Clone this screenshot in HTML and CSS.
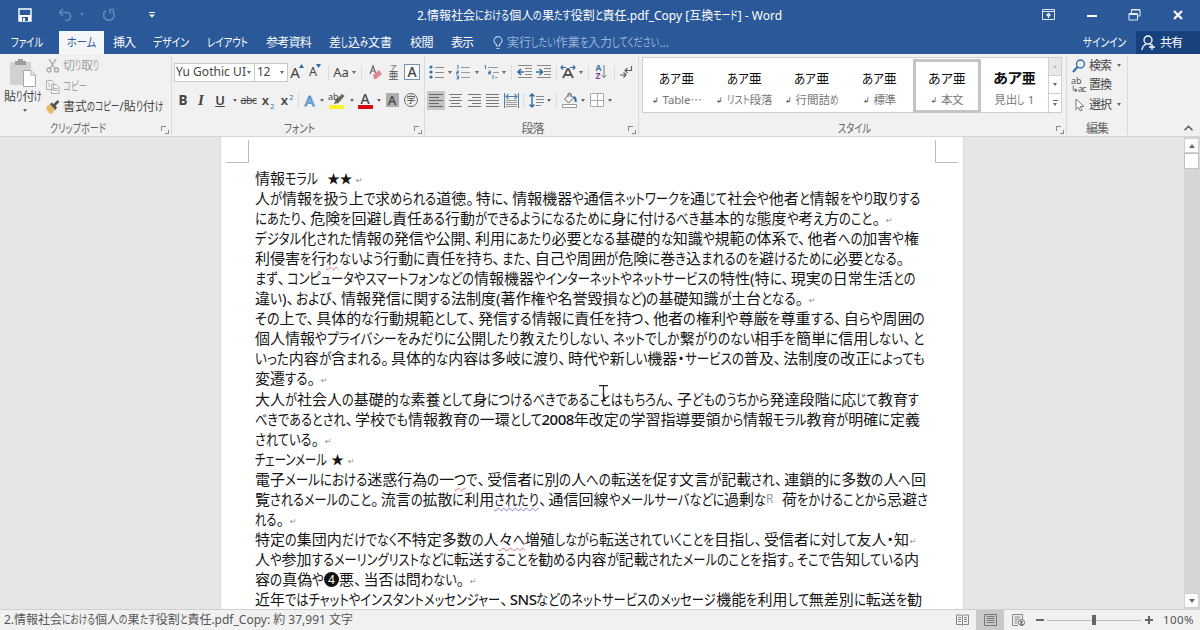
FILE: index.html
```html
<!doctype html>
<html lang="ja">
<head>
<meta charset="utf-8">
<title>2.情報社会における個人の果たす役割と責任.pdf_Copy - Word</title>
<link rel="stylesheet" href="styles.css">
</head>

<body>
<div class="app">
	<header class="top">
		<div class="titlebar">
			<div class="quick">
				<svg width="14" height="14" viewBox="0 0 14 14"><path d="M1 1h12v12H1z" fill="none" stroke="#fff" stroke-width="1.4"/><path d="M1 7h12v6H1z" fill="#fff"/><path d="M4 9h6v4H4z" fill="#2a5899"/><path d="M5 10h2v3H5z" fill="#fff"/></svg>
				<svg width="14" height="14" viewBox="0 0 14 14" fill="none" stroke="#5f86bd" stroke-width="1.7"><path d="M5 1 1.500 4.500 5 8M2 4.500h6.500a4 4 0 0 1 0 8H7"/></svg>
				<i class="arr dim"></i>
				<svg width="14" height="14" viewBox="0 0 14 14" fill="none" stroke="#5f86bd" stroke-width="1.7"><path d="M4 2.500a5.300 5.300 0 1 0 6.500.5M8 5.500V1.500h4.500"/></svg>
				<svg width="6" height="6" viewBox="0 0 6 6" fill="#fff"><path d="M0 0h6v1H0zM0 2.500h6L3 5.500z"/></svg>
			</div>
			<div class="doctitle"><span data-w="365">2.情報社会における個人の果たす役割と責任.pdf_Copy [互換モード] - Word</span></div>
			<div class="winbtns">
				<svg width="13" height="11" viewBox="0 0 13 11" fill="none" stroke="#dce9ee"><path d="M.5.5h12v10H.5zM.5 2.500h12"/><path d="M6.500 9V4.500M4.500 6.500l2-2 2 2" stroke-width="1.500"/></svg>
				<svg width="10" height="11" viewBox="0 0 10 11"><path d="M0 6h10v2H0z" fill="#fff"/></svg>
				<svg width="13" height="13" viewBox="0 0 13 13" fill="none" stroke="#e6efef"><path d="M1 5.500h8.500v6.500H1zM1 6.500h8.500M3.500 5V1.500H12V8H10M3.500 2h8.500"/></svg>
				<svg width="10" height="10" viewBox="0 0 10 10"><path d="M1 1l8 8M9 1 1 9" stroke="#fff" stroke-width="2.200"/></svg>
			</div>
		</div>
		<nav class="tabs">
			<span data-w="32">ファイル</span>
			<span class="active"><b data-w="29">ホーム</b></span>
			<span data-w="22">挿入</span>
			<span data-w="36">デザイン</span>
			<span data-w="41">レイアウト</span>
			<span data-w="45">参考資料</span>
			<span data-w="63">差し込み文書</span>
			<span data-w="23">校閲</span>
			<span data-w="22">表示</span>
			<div class="tell">
				<svg width="10" height="14" viewBox="0 0 10 14" fill="none" stroke="#b9cde8" stroke-width="1.200"><path d="M3.500 10V8.500C2 7.500 1 6.500 1 4.700a4 4 0 0 1 8 0C9 6.500 8 7.500 6.500 8.500V10zM3.500 12.500h3"/></svg>
				<span data-w="162">実行したい作業を入力してください...</span>
			</div>
			<span class="signin" data-w="43">サインイン</span>
			<div class="share">
				<svg width="15" height="16" viewBox="0 0 15 16" fill="none" stroke="#fff" stroke-width="1.300"><circle cx="7" cy="5" r="4"/><path d="M1 15c.3-3 2-5 4.500-6M8.500 9l1.500 1M11 9v6M8 12h6"/></svg>
				<span data-w="22">共有</span>
			</div>
		</nav>
	</header>

	<section class="ribbon">
		<div class="group clip">
			<div class="clipbody">
				<div class="paste">
					<svg width="28" height="28" viewBox="0 0 28 28"><path d="M1 3h21v23H1z" fill="#d2d0d3"/><path d="M6 2h3V0h5v2h3v4H6z" fill="#9d9d9f"/><path d="M14.500 11.500H22l4.500 4.500v11.500h-12z" fill="#fff" stroke="#a9a9a9"/><path d="M22 11.500V16h4.500" fill="none" stroke="#a9a9a9"/></svg>
					<span data-w="38">貼り付け</span>
					<i class="arr"></i>
				</div>
				<div class="cliplist">
					<div class="off"><svg width="14" height="14" viewBox="0 0 14 14" fill="none" stroke="#a6a6a6" stroke-width="1.300"><path d="M3 0l6 9.500M10 0 4 9.500"/><circle cx="3" cy="11" r="2"/><circle cx="10.500" cy="11" r="2"/></svg><span data-w="36">切り取り</span></div>
					<div class="off"><svg width="14" height="14" viewBox="0 0 14 14" fill="#f4f4f4" stroke="#b0b0b0"><path d="M.5.5h5l2 2v7h-7zM5.500 4.500h5l2.500 2.500v6.500H5.500zM2 4h2M2 6h2M7.500 8.500h4M7.500 10.500h4"/></svg><span data-w="24">コピー</span></div>
					<div><svg width="14" height="14" viewBox="0 0 14 14"><path d="M0 7l4-3 5 5-3 5c-3 0-5-3-6-7z" fill="#e9b96a"/><path d="M4 4l2-1.500 5 5L9.500 10z" fill="#505050"/><path d="M8 5.500 12.500 1" stroke="#505050" stroke-width="2.500"/></svg><span data-w="100">書式のコピー/貼り付け</span></div>
				</div>
			</div>
			<div class="label"><span data-w="56">クリップボード</span><i class="launch"></i></div>
		</div>

		<div class="group font">
			<div class="row f1">
				<div class="combo"><span data-w="70">Yu Gothic UI</span><i class="arr"></i></div>
				<div class="combo size"><span data-w="13">12</span><i class="arr"></i></div>
				<div class="gA">A<svg width="5" height="4" viewBox="0 0 5 4"><path d="M0 4h5L2.500 0z" fill="#2e6cab"/></svg></div>
				<div class="gA small">A<svg width="5" height="4" viewBox="0 0 5 4"><path d="M0 0h5L2.500 4z" fill="#2e6cab"/></svg></div>
				<i class="sep"></i>
				<div class="aa">Aa</div><i class="arr"></i>
				<i class="sep"></i>
				<svg width="15" height="16" viewBox="0 0 15 16"><path d="M2 10 5 2l3 8M3 7h4" fill="none" stroke="#666" stroke-width="1.200"/><path d="M5 11l6-5 3 4-6 5H6z" fill="#e08791"/></svg>
				<div class="ruby"><small>ア</small>亜</div>
				<div class="boxA">A</div>
			</div>
			<div class="row f2">
				<b class="fb">B</b>
				<i class="fi">I</i>
				<u class="fu">U</u><i class="arr"></i>
				<s class="fs" data-w="16">abc</s>
				<div class="xx">x<sub>2</sub></div>
				<div class="xx">x<sup>2</sup></div>
				<i class="sep"></i>
				<div class="glow">A</div><i class="arr"></i>
				<svg class="marker" width="18" height="17" viewBox="0 0 18 17"><path d="M1 13h15v4H1z" fill="#fbf22a"/><path d="M6 12l1.500-4L14 2l2.500 2-6 7z" fill="#6a6a5a"/><text x="0" y="8" class="tiny">ab</text></svg><i class="arr"></i>
				<div class="redA">A</div><i class="arr"></i>
				<div class="shadeA">A</div>
				<div class="enc">字</div>
			</div>
			<div class="label"><span data-w="31">フォント</span><i class="launch"></i></div>
		</div>

		<div class="group para">
			<div class="row p1">
				<svg width="15" height="14" viewBox="0 0 15 14"><g fill="#2f6da8"><circle cx="2" cy="2" r="1.600"/><circle cx="2" cy="7" r="1.600"/><circle cx="2" cy="12" r="1.600"/></g><path d="M6 2.500h9M6 7.500h9M6 12.500h9" stroke="#888"/></svg><i class="arr"></i>
				<svg width="15" height="15" viewBox="0 0 15 15"><path d="M1 .5h1V4M.5 6h2v1.500h-2V9h2M.5 11h2v3h-2M1 12.500h1" fill="none" stroke="#2f6da8" stroke-width=".9"/><path d="M5 2.500h9M5 7.500h9M5 12.500h9" stroke="#999"/></svg><i class="arr"></i>
				<svg width="15" height="15" viewBox="0 0 15 15"><path d="M.5.500h1V4M4.500 6h2v3h-2V7.500h2M9 10v4" fill="none" stroke="#2f6da8" stroke-width=".9"/><path d="M4 2.500h10M9 7.500h6M11 12.500h3" stroke="#999"/></svg><i class="arr"></i>
				<i class="sep"></i>
				<svg width="15" height="14" viewBox="0 0 15 14"><path d="M1 .5h14M8 3.500h7M8 6.500h7M8 9.500h7M1 12.500h14" stroke="#888"/><path d="M7 7H2M4 4 1 7l3 3" fill="none" stroke="#2f6da8" stroke-width="1.700"/></svg>
				<svg width="15" height="14" viewBox="0 0 15 14"><path d="M1 .5h14M8 3.500h7M8 6.500h7M8 9.500h7M1 12.500h14" stroke="#888"/><path d="M0 7h6M3.500 4l3 3-3 3" fill="none" stroke="#2f6da8" stroke-width="1.700"/></svg>
				<i class="sep"></i>
				<svg width="16" height="14" viewBox="0 0 16 14"><path d="M3 13 7.500 4h1L13 13M5 10h6" fill="none" stroke="#555" stroke-width="1.800"/><path d="M6 2.500H1M3 .5l-2 2 2 2M10 2.500h5M13 .5l2 2-2 2" fill="none" stroke="#2f6da8" stroke-width="1.200"/></svg><i class="arr"></i>
				<i class="sep"></i>
				<div class="sort"><span><b>A</b><b class="z">Z</b></span><svg width="6" height="14" viewBox="0 0 6 14" fill="none" stroke="#777"><path d="M3 0v13M.5 10 3 12.500 5.500 10"/></svg></div>
				<i class="sep"></i>
				<svg width="14" height="13" viewBox="0 0 14 13" fill="none" stroke="#606060" stroke-width="1.200"><path d="M12.500 0v4.500H6M8.500 2 6 4.500 8.500 7M1 9h6M4.500 6.500 7 9l-2.500 2.500"/></svg>
			</div>
			<div class="row p2">
				<div class="picked"><svg width="14" height="15" viewBox="0 0 14 15" stroke="#666"><path d="M0 1.500h14M0 4.500h10M0 7.500h14M0 10.500h10M0 13.500h14"/></svg></div>
				<svg width="13" height="15" viewBox="0 0 13 15" stroke="#777"><path d="M0 1.500h13M2 4.500h9M0 7.500h13M2 10.500h9M0 13.500h13"/></svg>
				<svg width="13" height="15" viewBox="0 0 13 15" stroke="#777"><path d="M0 1.500h13M4 4.500h9M0 7.500h13M4 10.500h9M0 13.500h13"/></svg>
				<svg width="13" height="15" viewBox="0 0 13 15" stroke="#777"><path d="M0 1.500h13M0 4.500h13M0 7.500h13M0 10.500h13M0 13.500h13"/></svg>
				<svg width="15" height="15" viewBox="0 0 15 15" fill="none"><path d="M2 7.500h11M2 9.500h11M2 11.500h11M2 13.500h11" stroke="#999"/><path d="M.5 0v15M14.500 0v15M2 3.500h11M4.500 1 2 3.500 4.500 6M10.500 1 13 3.500 10.500 6" stroke="#4a7fb3" stroke-width="1.100"/></svg>
				<i class="sep"></i>
				<svg width="15" height="15" viewBox="0 0 15 15" fill="none"><path d="M7 3.500h8M7 6.500h8M7 9.500h8M7 12.500h5" stroke="#888"/><path d="M3 1v13M.5 3.500 3 1l2.500 2.500M.5 11.500 3 14l2.500-2.500" stroke="#2f6da8" stroke-width="1.400"/></svg><i class="arr"></i>
				<i class="sep"></i>
				<svg width="15" height="16" viewBox="0 0 15 16" fill="none"><path d="M.5 12.500h14v3H.5z" fill="#fff" stroke="#999"/><path d="M2.500 7 7.500 2l4 4-5 5zM6 5V2.500a1.500 1.500 0 0 1 3 0V5" stroke="#666"/><path d="M11.500 5c2 .5 2.500 2 2 5" stroke="#2f6da8" stroke-width="2"/></svg><i class="arr"></i>
				<svg width="14" height="14" viewBox="0 0 14 14"><path d="M.5.5h13v13H.5zM7.500.5v13M.5 7.500h13" fill="#fff" stroke="#a8a8a8"/></svg><i class="arr"></i>
			</div>
			<div class="label"><span data-w="22">段落</span><i class="launch"></i></div>
		</div>

		<div class="group styles">
			<div class="gallery">
				<div class="card"><p data-w="35">あア亜</p><small><em>↲</em><span data-w="39">Table⋯</span></small></div>
				<div class="card"><p data-w="35">あア亜</p><small><em>↲</em><span data-w="46">リスト段落</span></small></div>
				<div class="card"><p data-w="35">あア亜</p><small><em>↲</em><span data-w="43">行間詰め</span></small></div>
				<div class="card"><p data-w="35">あア亜</p><small><em>↲</em><span data-w="22">標準</span></small></div>
				<div class="card on"><p data-w="38">あア亜</p><small><em>↲</em><span data-w="22">本文</span></small></div>
				<div class="card head"><p data-w="43">あア亜</p><small><span data-w="40">見出し 1</span></small></div>
				<div class="updown">
					<span class="dis"><i class="arr up"></i></span>
					<span><i class="arr"></i></span>
					<span class="more"><i class="arr"></i></span>
				</div>
			</div>
			<div class="label"><span data-w="33">スタイル</span><i class="launch"></i></div>
		</div>

		<div class="group edit">
			<div class="editlist">
				<div><svg width="14" height="14" viewBox="0 0 14 14" fill="none" stroke="#2f6da8"><circle cx="8.500" cy="5" r="4" stroke-width="1.400"/><path d="M5.500 8 1 13" stroke-width="2"/></svg><span data-w="22">検索</span><i class="arr"></i></div>
				<div><span class="rep"><b>ab</b><b>↳ac</b></span><span data-w="22">置換</span></div>
				<div><svg width="14" height="14" viewBox="0 0 14 14"><path d="M4 1v10.500l2.500-2.500 1.800 4 1.700-.8L8.300 8.500H12z" fill="#fff" stroke="#777"/></svg><span data-w="22">選択</span><i class="arr"></i></div>
			</div>
			<div class="label"><span data-w="22">編集</span></div>
		</div>
		<svg class="fold" width="9" height="6" viewBox="0 0 9 6" fill="none" stroke="#555" stroke-width="1.500"><path d="M.5 5.200 4.500 1.200l4 4"/></svg>
	</section>

	<main class="work">
		<article class="page">
			<div class="crops"><i></i><i class="r"></i></div>
			<div class="text">
				<p><span data-w="63">情報モラル</span><span class="star" data-w="25">★★</span><em>↵</em></p>
				<p><span data-w="665">人が情報を扱う上で求められる道徳。特に、情報機器や通信ネットワークを通じて社会や他者と情報をやり取りする</span></p>
				<p><span data-w="627">にあたり、危険を回避し責任ある行動ができるようになるために身に付けるべき基本的な態度や考え方のこと。</span><em>↵</em></p>
				<p><span data-w="664">デジタル化された情報の発信や公開、利用にあたり必要となる基礎的な知識や規範の体系で、他者への加害や権</span></p>
				<p><span data-w="651">利侵害を行<u>わ</u>ないよう行動に責任を持ち、また、自己や周囲が危険に巻き込まれるのを避けるために必要となる。</span></p>
				<p><span data-w="660">まず、コンピュータやスマートフォンなどの情報機器やインターネットやネットサービスの特性(特に、現実の日常生活との</span></p>
				<p><span data-w="550">違い)、および、情報発信に関する法制度(著作権や名誉毀損など)の基礎知識が土台となる。</span><em>↵</em></p>
				<p><span data-w="670">その上で、具体的な行動規範として、発信する情報に責任を持つ、他者の権利や尊厳を尊重する、自らや周囲の</span></p>
				<p><span data-w="669">個人情報やプライバシーをみだりに公開したり教えたりしない、ネットでしか繋がりのない相手を簡単に信用しない、と</span></p>
				<p><span data-w="670">いった内容が含まれる。具体的な内容は多岐に渡り、時代や新しい機器・サービスの普及、法制度の改正によっても</span></p>
				<p><span data-w="62">変遷する。</span><em>↵</em></p>
				<p><span data-w="664">大人が社会人の基礎的な素養として身につけるべきであることはもちろん、子どものうちから発達段階に応じて教育す</span></p>
				<p><span data-w="665">べきであるとされ、学校でも情報教育の一環として<b>2008</b>年改定の学習指導要領から情報モラル教育が明確に定義</span></p>
				<p><span data-w="66">されている。</span><em>↵</em></p>
				<p><span data-w="72">チェーンメール</span><span class="star one" data-w="13">★</span><em>↵</em></p>
				<p><span data-w="671">電子メールにおける迷惑行為の一<u>つ</u>で、受信者に別の人への転送を促す文言が記載され、連鎖的に多数の人へ回</span></p>
				<p><span data-w="511">覧されるメールのこと。流言の拡散に利用<u class="blue">されたり</u>、通信回線やメールサーバなどに過剰な</span><span class="r">R</span><span data-w="146">荷をかけることから忌避さ</span></p>
				<p><span data-w="31">れる。</span><em>↵</em></p>
				<p><span data-w="654">特定の集団内だけでなく不特定多数の人<u>々へ</u>増殖しながら転送されていくことを目指し、受信者に対して友人・知</span><em class="near">↵</em></p>
				<p><span data-w="664">人や参加するメーリングリストなどに転送することを勧める内容が記載されたメールのことを指す。そこで告知している内</span></p>
				<p><span data-w="69">容の真偽や</span><span class="num">4</span><span data-w="127">悪、当否は問わない。</span><em>↵</em></p>
				<p><span data-w="667">近年ではチャットやインスタントメッセンジャー、<b>SNS</b>などのネットサービスのメッセージ機能を利用して無差別に転送を勧</span></p>
			</div>
			<svg class="ibeam" width="9" height="18" viewBox="0 0 9 18" fill="none" stroke="#222" stroke-width="1.200"><path d="M0 .6h9M4.500.6v15M2 15.600h5"/></svg>
		</article>
		<div class="scroll">
			<span><i class="arr up"></i></span>
			<div class="thumb"></div>
			<span class="end"><i class="arr"></i></span>
		</div>
	</main>

	<footer class="status">
		<span class="count" data-w="349">2.情報社会における個人の果たす役割と責任.pdf_Copy: 約 37,991 文字</span>
		<div class="view"><svg width="13" height="12" viewBox="0 0 13 12" fill="none" stroke="#888"><path d="M.5 1h5l1 1 1-1h5v9.500h-5l-1 1-1-1h-5zM6.500 2v9M2 3.500h3M2 5.500h3M2 7.500h3M8 3.500h3M8 5.500h3M8 7.500h3"/></svg></div>
		<div class="view on"><svg width="13" height="12" viewBox="0 0 13 12" fill="none" stroke="#777"><path d="M.5.5h12v11H.5zM2.500 2.500h8M2.500 4.500h8M2.500 6.500h8M2.500 8.500h8"/></svg></div>
		<div class="view"><svg width="13" height="12" viewBox="0 0 13 12" fill="none" stroke="#888"><path d="M6 11.500H.5V.5h10V5M2.500 3h6M2.500 5h5M2.500 7h3M2.500 9h3"/><circle cx="9.500" cy="8.500" r="3" fill="#fff" stroke="#666"/><path d="M8 7l2 1-1 2 2 1" stroke="#666" stroke-width="1.500"/></svg></div>
		<i class="minus"></i>
		<div class="slider"><i></i></div>
		<i class="minus plus"></i>
		<span class="pct" data-w="31">100%</span>
	</footer>
</div>
<script src="script.js"></script>
</body>
</html>
```
FILE: styles.css
```css
*{ margin:0; padding:0; box-sizing:border-box}
body{ width:1200px; height:630px; overflow:hidden; font:12px/16px "Noto Sans","Noto Sans CJK JP",sans-serif; color:#444; font-feature-settings:"palt"}
i,em{ font-style:normal}
svg{ display:block; flex:none}
[data-w]{ display:inline-block; white-space:nowrap; flex:none}
.arr{ display:block; width:0; height:0; border:2.5px solid transparent; border-top:3px solid #666; border-bottom:0; flex:none}
.arr.up{ border-top:0; border-bottom:3px solid #888}
.arr.dim{ border-top-color:#5f86bd}
.app{ height:630px; display:flex; flex-direction:column}

/* title bar */
.top{ height:54px; background:#2a5899; color:#fff; flex:none}
.titlebar{ height:31px; display:grid; grid-template-columns:417px 1fr 160px; align-items:center}
.quick{ display:flex; align-items:center; padding:0 0 2px 18px}
.quick svg:nth-child(2){ margin-left:26px}
.quick .arr{ margin-left:8px}
.quick svg:nth-child(4){ margin-left:18px}
.quick svg:nth-child(5){ margin-left:33px}
.doctitle{ font-size:12px}
.winbtns{ display:flex; align-items:center; justify-content:space-between; padding:0 17px 2px 2px}

/* tabs */
.tabs{ height:23px; display:flex; gap:18px; align-items:center; padding-left:11px}
.tabs .active{ background:#f5f6f8; color:#2a5899; width:45px; height:23px; padding:4px 0 0 8px; margin:0 -9px 0 -2px; flex:none}
.tabs .active b{ font-weight:400}
.tell{ display:flex; gap:4px; align-items:center; margin-left:2px; color:#9bb5da}
.signin{ margin-left:auto}
.share{ width:64px; height:23px; background:#18427d; display:flex; align-items:center; gap:4px; padding-left:5px; margin-left:-8px; flex:none}

/* ribbon */
.ribbon{ height:83px; background:#f1f1f1; border-bottom:1px solid #d4d4d4; display:flex; position:relative; flex:none; padding-top:2px}
.group{ height:79px; border-right:1px solid #dadada; display:flex; flex-direction:column; flex:none}
.group .label{ margin-top:auto; height:13px; line-height:14px; display:grid; place-items:center; color:#666; position:relative}
.launch{ position:absolute; right:5px; top:4px; width:5px; height:5px; border:1px solid #888; border-right:0; border-bottom:0}
.launch:after{ content:""; position:absolute; left:3px; top:3px; width:3px; height:3px; border:1px solid #888; border-left:0; border-top:0}
.clip{ width:172px}
.clip .label{ padding-right:15px}
.clipbody{ display:flex}
.paste{ width:46px; display:flex; flex-direction:column; align-items:center; padding-top:3px}
.paste span{ margin-top:1px}
.paste .arr{ margin-top:4px; margin-left:4px}
.cliplist{ display:flex; flex-direction:column; gap:4.5px; padding-top:2px}
.cliplist div{ display:flex; align-items:center; gap:3px; height:16px}
.cliplist .off{ color:#a0a0a0}
.row{ display:grid; align-items:center; justify-items:center; height:20px}
.sep{ width:1px; height:15px; background:#dcdcdc}
.font{ width:253px; padding-left:2px}
.f1{ grid-template-columns:80px 34px 18px 18px 8px 18px 7px 9px 19px 17px 20px; margin-top:6px}
.f2{ grid-template-columns:18px 18px 20px 9px 19px 20px 18px 5px 17px 8px 22px 7px 20px 7px 20px 18px; margin-top:8px; color:#444}
.combo{ width:81px; height:19px; border:1px solid #c9c9c9; background:#fff; display:flex; align-items:center; justify-content:space-between; padding:0 3px 0 1px; justify-self:start}
.combo.size{ width:34px; padding-left:2px}
.gA{ font-size:15px; display:flex; align-items:center}
.gA svg{ align-self:flex-start; margin-left:-1px}
.gA.small{ font-size:12.5px}
.aa{ font-size:13px}
.ruby{ font-size:10px; line-height:9px; display:flex; flex-direction:column; align-items:center; color:#555}
.ruby small{ font-size:7px; line-height:7px}
.boxA{ width:16px; height:16px; border:1px solid #7895b8; font-size:14px; line-height:14px; text-align:center; font-weight:500; background:#fafafa}
.fb{ font-size:13.5px}
.fi{ font:italic 700 15px/16px "Liberation Serif",serif}
.fu{ font-size:13px; font-weight:600}
.fs{ font-size:10.5px}
.xx{ font-size:13px; font-weight:600; white-space:nowrap}
.xx sub,.xx sup{ font-size:7px; line-height:0; color:#2f6da8; margin-left:1px; font-weight:400}
.glow{ font-size:15px; font-weight:400; color:#f7fbff; -webkit-text-stroke:1px #4f8fc6}
.marker{ overflow:visible}
.tiny{ font-size:9px; fill:#444}
.redA{ width:15px; height:17px; border-bottom:4px solid #d30d0d; font-size:14px; line-height:13px; text-align:center; font-weight:500}
.shadeA{ width:13px; height:14px; background:#aeaeae; font-size:13px; line-height:14px; text-align:center; font-weight:500}
.enc{ width:14px; height:14px; border:1px solid #666; border-radius:50%; font-size:9px; line-height:12px; text-align:center}
.para{ width:214px; padding-left:2px}
.p1{ grid-template-columns:18px 9px 18px 10px 18px 7px 8px 18px 20px 7px 16px 9px 7px 19px 6px 18px; margin-top:6px}
.p2{ grid-template-columns:18px 20px 18px 18px 20px 5px 20px 5px 11px 15px 11px 18px 8px; margin-top:8px}
.picked{ width:18px; height:19px; background:#c6c6c6; display:grid; place-items:center}
.sort{ display:flex; align-items:center}
.sort b{ display:block; font-size:8.5px; line-height:8px; color:#2f6da8}
.sort .z{ color:#7d3c98}

/* style gallery */
.styles{ width:428px; padding-left:3px}
.gallery{ width:420px; height:56px; margin-top:1px; border:1px solid #cfcfcf; background:#fff; display:grid; grid-template-columns:repeat(6,1fr) 13px}
.card{ display:flex; flex-direction:column; align-items:center; padding-top:11px; margin:1px 0}
.card p{ font-size:13px; line-height:16px; color:#111}
.card small{ font-size:11.5px; line-height:16px; margin-top:6px; color:#777; display:flex; gap:4px}
.card small em{ font:8px/18px "DejaVu Sans",sans-serif; color:#444}
.card.on{ border:3px solid #c4c4c4; padding-top:8px}
.card.head p{ font-size:14px; font-weight:700}
.updown{ border-left:1px solid #cfcfcf; display:grid; grid-template-rows:repeat(3,18px)}
.updown span{ display:grid; place-content:center; border-bottom:1px solid #cfcfcf}
.updown span:last-child{ border-bottom:0}
.updown .dis{ background:#e8e8e8}
.updown .dis .arr{ border-bottom-color:#bbb}
.more:before{ content:""; width:5px; height:1px; background:#666; margin-bottom:2px}
.edit{ width:61px}
.editlist{ padding:0 0 0 5px}
.editlist div{ display:flex; align-items:center; gap:3px; height:19.5px}
.editlist div:first-child{ padding-left:0}
.editlist .arr{ margin-left:3px}
.rep{ width:14px; font-size:9px; line-height:8px; white-space:nowrap; color:#555; margin-left:-1px; margin-right:1px}
.rep b{ display:block; font-weight:400}
.rep b:last-child{ letter-spacing:-1px}
.fold{ position:absolute; right:7px; bottom:5px}

/* document */
.work{ height:472px; background:#e6e6e6; display:flex; overflow:hidden; flex:none}
.page{ width:744px; margin-left:220px; background:#fff; border:1px solid #dcdcdc; border-width:0 1px; position:relative}
.crops{ display:flex; justify-content:space-between; padding:3px 5px 0}
.crops i{ width:23px; height:23px; border:1px solid #bdbdbd; border-width:0 1px 1px 0}
.crops .r{ border-width:0 0 1px 1px}
.text{ font-size:15px; line-height:20.05px; color:#151515; padding:5px 0 0 34px}
.text p{ display:flex; height:20.05px; white-space:nowrap}
.text em{ font:8px/26px "DejaVu Sans",sans-serif; color:#888; margin-left:4px}
.text em.near{ margin-left:1px}
.text b{ font-weight:500; letter-spacing:-.5px}
.star{ margin-left:9px; font-size:13px; font-family:"Noto Sans CJK JP",sans-serif}
.star.one{ margin-left:4px}
.text u,.text u .kana{ text-decoration:underline wavy #d46a6a 1px; text-underline-offset:2px; text-decoration-skip-ink:none}
.text u.blue,.text u.blue .kana{ text-decoration-color:#6d6dcb}
.text .r{ width:16px; font-size:12px; color:#999}
.num{ width:15px; height:15px; margin:3px 0 0; border-radius:50%; background:#111; color:#fff; font-size:12px; line-height:15px; text-align:center}
.ibeam{ position:absolute; left:378px; top:248px}
.scroll{ margin-left:auto; width:16px; background:#d6d6d6; display:flex; flex-direction:column}
.scroll span{ width:15px; height:15px; margin-top:1px; background:#fdfdfd; border:1px solid #d0d0d0; display:grid; place-items:center}
.scroll .thumb{ width:15px; height:16px; background:#fff; border:1px solid #c2c2c2}
.scroll .end{ margin-top:auto; margin-bottom:1px}
.scroll .arr{ border-width:3.5px; border-top:4px solid #666; border-bottom:0}
.scroll .arr.up{ border-bottom:4px solid #666; border-top:0}

/* status bar */
.status{ height:21px; border-top:1px solid #cfcfcf; background:#f1f1f1; display:flex; align-items:center; padding-left:4px; color:#555}
.view{ width:28px; height:20px; display:grid; place-items:center; flex:none}
.count + .view{ margin-left:595px}
.view.on{ background:#c9c9c9}
.minus{ width:8px; height:2px; background:#666; margin-left:4px; flex:none}
.plus{ margin-left:4px; position:relative}
.plus:after{ content:""; position:absolute; left:3px; top:-3px; width:2px; height:8px; background:#666}
.slider{ width:94px; height:10px; background:linear-gradient(#bdbdbd,#bdbdbd) 0 5px/100% 1px no-repeat; margin-left:3px; display:grid; place-items:center; flex:none}
.slider i{ width:4px; height:10px; background:#666}
.pct{ margin-left:10px; font-size:11.5px}

/* kana is narrower than kanji */
.kana{ display:inline-block; transform-origin:0 50%}
.pt{ letter-spacing:2px}
```
FILE: script.js
```js
// かなだけを細くして、行の幅を data-w に合わせる
function wrapKana(node){
	if(node.nodeType==3){
		var box=document.createDocumentFragment();
		node.nodeValue.split(/([ぁ-ゖァ-ヺー]+|[、。]+)/).forEach(function(str){
			if(str=='') return;
			if(/^[ぁ-ゖァ-ヺー、。]/.test(str)){
				var s=document.createElement('span');
				s.className=/^[、。]/.test(str)?'pt':'kana';
				s.textContent=str;
				box.appendChild(s);
			}else{
				box.appendChild(document.createTextNode(str));
			}
		});
		node.parentNode.replaceChild(box,node);
	}else{
		Array.from(node.childNodes).forEach(wrapKana);
	}
}

document.querySelectorAll('[data-w]').forEach(function(el){
	wrapKana(el);
	var rest=el.dataset.w-el.getBoundingClientRect().width;
	var kana=Array.from(el.querySelectorAll('.kana'));
	if(kana.length){
		var widths=kana.map(function(k){ return k.getBoundingClientRect().width; });
		var total=widths.reduce(function(a,b){ return a+b; });
		var scale=(total+rest)/total;
		kana.forEach(function(k,i){
			k.style.transform='scaleX('+scale+')';
			k.style.marginRight=widths[i]*(scale-1)+'px';
		});
	}else{
		el.style.letterSpacing=rest/el.textContent.length+'px';
	}
});
```
